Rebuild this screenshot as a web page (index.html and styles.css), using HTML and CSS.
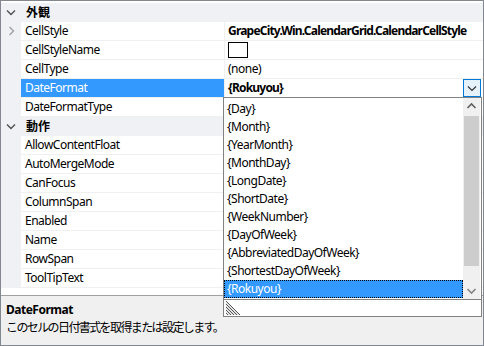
FILE: index.html
```html
<!DOCTYPE html>
<html lang="ja">
<head>
<meta charset="utf-8">
<title>Property Grid</title>
<link rel="stylesheet" href="styles.css">
</head>
<body>
<div class="pg">
  <div class="grid">
    <div class="row cat">
      <span class="gut"><svg width="20" height="18" viewBox="0 0 20 18"><path d="M6 7.5 L10 11.5 L14 7.5" fill="none" stroke="#505050" stroke-width="1.4"/></svg></span>
      <span class="cname">外観</span>
    </div>
    <div class="row">
      <span class="gut"><svg width="20" height="18" viewBox="0 0 20 18"><path d="M8.5 5 L12.5 9 L8.5 13" fill="none" stroke="#a0a0a0" stroke-width="1.4"/></svg></span>
      <span class="name">CellStyle</span>
      <span class="val b">GrapeCity.Win.CalendarGrid.CalendarCellStyle</span>
    </div>
    <div class="row">
      <span class="gut"></span>
      <span class="name">CellStyleName</span>
      <span class="val"><span class="box"></span></span>
    </div>
    <div class="row">
      <span class="gut"></span>
      <span class="name">CellType</span>
      <span class="val">(none)</span>
    </div>
    <div class="row sel">
      <span class="gut"></span>
      <span class="name">DateFormat</span>
      <span class="val edit"><span class="b grow">{Rokuyou}</span><span class="ddbtn"><svg width="16" height="16" viewBox="0 0 16 16"><path d="M4 6.5 L8 10.5 L12 6.5" fill="none" stroke="#333" stroke-width="1.2"/></svg></span></span>
    </div>
    <div class="row">
      <span class="gut"></span>
      <span class="name">DateFormatType</span>
      <span class="val"></span>
    </div>
    <div class="row cat">
      <span class="gut"><svg width="20" height="18" viewBox="0 0 20 18"><path d="M6 7.5 L10 11.5 L14 7.5" fill="none" stroke="#505050" stroke-width="1.4"/></svg></span>
      <span class="cname">動作</span>
    </div>
    <div class="row"><span class="gut"></span><span class="name">AllowContentFloat</span><span class="val"></span></div>
    <div class="row"><span class="gut"></span><span class="name">AutoMergeMode</span><span class="val"></span></div>
    <div class="row"><span class="gut"></span><span class="name">CanFocus</span><span class="val"></span></div>
    <div class="row"><span class="gut"></span><span class="name">ColumnSpan</span><span class="val"></span></div>
    <div class="row"><span class="gut"></span><span class="name">Enabled</span><span class="val"></span></div>
    <div class="row"><span class="gut"></span><span class="name">Name</span><span class="val"></span></div>
    <div class="row"><span class="gut"></span><span class="name">RowSpan</span><span class="val"></span></div>
    <div class="row"><span class="gut"></span><span class="name">ToolTipText</span><span class="val"></span></div>
  </div>
  <div class="desc">
    <div class="dt">DateFormat</div>
    <div class="dd">このセルの日付書式を取得または設定します。</div>
  </div>

  <div class="drop">
    <div class="list">
      <ul class="items">
        <li>{Day}</li>
        <li>{Month}</li>
        <li>{YearMonth}</li>
        <li>{MonthDay}</li>
        <li>{LongDate}</li>
        <li>{ShortDate}</li>
        <li>{WeekNumber}</li>
        <li>{DayOfWeek}</li>
        <li>{AbbreviatedDayOfWeek}</li>
        <li>{ShortestDayOfWeek}</li>
        <li class="on">{Rokuyou}</li>
      </ul>
      <div class="sb">
        <div class="arr"><svg width="17" height="17" viewBox="0 0 17 17"><path d="M4.5 10 L8.5 6 L12.5 10" fill="none" stroke="#606060" stroke-width="1.6"/></svg></div>
        <div class="thumb"></div>
        <div class="track"></div>
        <div class="arr"><svg width="17" height="17" viewBox="0 0 17 17"><path d="M4.5 7 L8.5 11 L12.5 7" fill="none" stroke="#858585" stroke-width="1.6"/></svg></div>
      </div>
    </div>
    <div class="grip">
      <svg width="16" height="16" viewBox="0 0 16 16">
        <path d="M1 1 L15 15 M1 4 L12 15 M1 7 L9 15 M1 10 L6 15 M1 13 L3 15" stroke="#555" stroke-width="1"/>
        <path d="M1 2.5 L13.5 15 M1 5.5 L10.5 15 M1 8.5 L7.5 15 M1 11.5 L4.5 15" stroke="#bbb" stroke-width="0.8"/>
      </svg>
    </div>
  </div>
</div>
</body>
</html>
```

FILE: styles.css
```css
* { box-sizing: border-box; }
html, body { margin: 0; padding: 0; background: #fff; }
body {
  font-family: "Noto Sans", "Noto Sans CJK JP", sans-serif;
  font-size: 12px;
  letter-spacing: -0.5px;
  color: #000;
}
.pg {
  position: relative;
  width: 484px;
  height: 346px;
  border: 1px solid #828790;
  display: flex;
  flex-direction: column;
  background: #fff;
}
.grid {
  height: 294px;
  padding-top: 2px;
  background: #fff;
}
.row {
  display: flex;
  height: 19px;
  line-height: 18px;
}
.gut {
  width: 20px;
  flex: none;
  background: #eff1f4;
  display: flex;
  align-items: flex-start;
}
.name {
  width: 204px;
  flex: none;
  padding-left: 4px;
  border-right: 1px solid #f0f0f0;
  border-bottom: 1px solid #f0f0f0;
  white-space: nowrap;
  overflow: hidden;
}
.val {
  flex: 1;
  padding-left: 3px;
  border-bottom: 1px solid #f0f0f0;
  white-space: nowrap;
  overflow: hidden;
  display: flex;
  align-items: flex-start;
}
.b { font-weight: bold; letter-spacing: -0.8px; }
.cat { background: #eff1f4; }
.cname {
  padding-left: 5px;
  font-weight: bold;
  letter-spacing: 0;
  font-family: "Noto Sans CJK JP", sans-serif;
}
.box {
  display: block;
  width: 20px;
  height: 16px;
  margin-top: 1px;
  border: 1px solid #000;
  background: #fff;
}
.sel .name { background: #3399ff; color: #fff; }
.edit .grow { flex: 1; }
.ddbtn {
  width: 18px;
  height: 18px;
  margin-right: 2px;
  border: 1px solid #0078d7;
  background: #e5f1fb;
  display: flex;
  align-items: center;
  justify-content: center;
}
.desc {
  flex: 1;
  border-top: 1px solid #a0a0a0;
  background: #f0f0f0;
  padding: 5px 0 0 5px;
}
.dt { font-weight: bold; line-height: 17px; }
.dd {
  line-height: 17px;
  font-family: "Noto Sans CJK JP", sans-serif;
  letter-spacing: -1.6px;
}
.drop {
  position: absolute;
  left: 222px;
  top: 96px;
  width: 259px;
  height: 220px;
  border: 1px solid #828282;
  background: #fff;
  display: flex;
  flex-direction: column;
}
.list {
  height: 202px;
  display: flex;
  border-bottom: 1px solid #828282;
}
.items {
  list-style: none;
  margin: 0;
  padding: 2px 0 0 0;
  width: 239px;
}
.items li {
  height: 18px;
  line-height: 18px;
  padding-left: 3px;
  white-space: nowrap;
}
.items li.on {
  background: #3399ff;
  color: #fff;
  outline: 1px dotted #000;
  outline-offset: -1px;
}
.sb {
  width: 17px;
  background: #f0f0f0;
  display: flex;
  flex-direction: column;
}
.arr { height: 17px; display: flex; }
.thumb { height: 150px; margin: 1px 1px 0 1px; background: #cdcdcd; }
.track { flex: 1; }
.grip {
  flex: 1;
  display: flex;
  align-items: flex-end;
  padding-left: 1px;
}
.grip svg { display: block; }
```
